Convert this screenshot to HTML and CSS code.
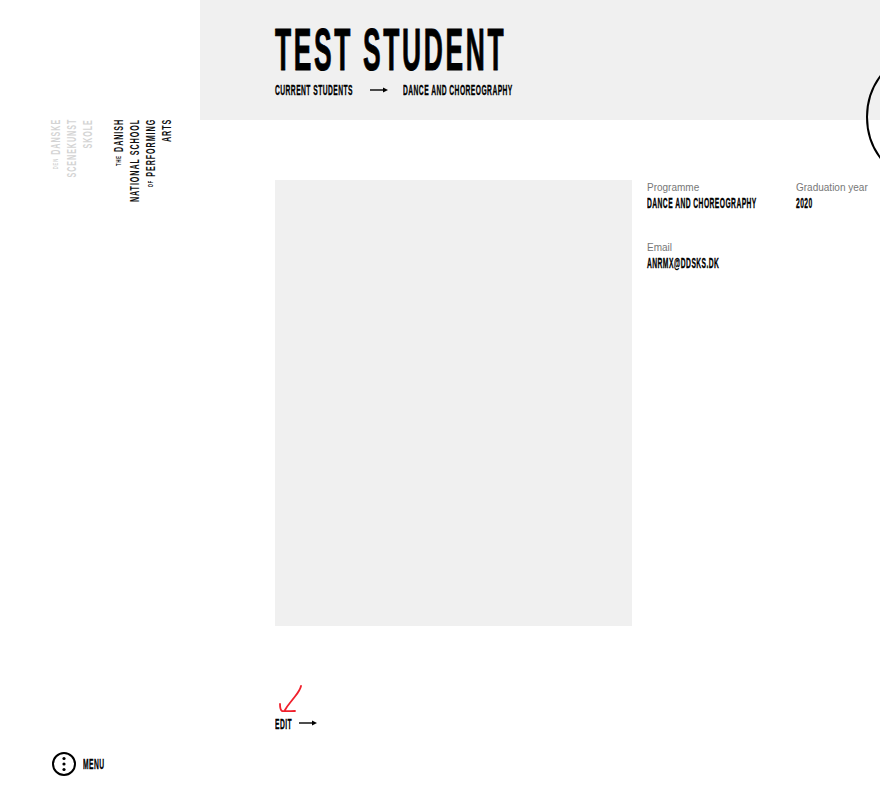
FILE: index.html
```html
<!DOCTYPE html>
<html lang="en">
<head>
    <meta charset="UTF-8">
    <title>Test Student</title>
    <link rel="stylesheet" href="styles.css">
</head>
<body>

<div class="page">
    <aside class="sidebar">
        <div class="logo">
            <div class="logo-block logo-da">
                <div><span class="small">DEN</span> DANSKE</div>
                <div>SCENEKUNST</div>
                <div>SKOLE</div>
            </div>
            <div class="logo-block logo-en">
                <div><span class="small">THE</span> DANISH</div>
                <div>NATIONAL SCHOOL</div>
                <div><span class="small">OF</span> PERFORMING</div>
                <div>ARTS</div>
            </div>
        </div>
        <div class="menu">
            <svg class="menu-icon" viewBox="0 0 24 24" width="24" height="24">
                <circle cx="12" cy="12" r="11" fill="none" stroke="#000" stroke-width="2"/>
                <circle cx="12" cy="6.5" r="1.6"/>
                <circle cx="12" cy="12" r="1.6"/>
                <circle cx="12" cy="17.5" r="1.6"/>
            </svg>
            <span class="narrow menu-label">MENU</span>
        </div>
    </aside>

    <main class="main">
        <header class="header">
            <h1 class="narrow title">TEST STUDENT</h1>
            <div class="crumbs">
                <span class="crumb-a"><span class="narrow">CURRENT STUDENTS</span></span>
                <svg class="arrow" viewBox="0 0 18 6" width="18" height="6"><path d="M0 3H14" stroke="#000" stroke-width="1.4"/><path d="M13 .6 18 3 13 5.4Z"/></svg>
                <span class="narrow">DANCE AND CHOREOGRAPHY</span>
            </div>
        </header>
        <div class="circle"></div>

        <section class="content">
            <div class="photo"></div>
            <div class="details">
                <div class="detail-row">
                    <div class="detail detail-wide">
                        <div class="label">Programme</div>
                        <div class="value"><span class="narrow">DANCE AND CHOREOGRAPHY</span></div>
                    </div>
                    <div class="detail">
                        <div class="label">Graduation year</div>
                        <div class="value"><span class="narrow">2020</span></div>
                    </div>
                </div>
                <div class="detail">
                    <div class="label">Email</div>
                    <div class="value"><span class="narrow">ANRMX@DDSKS.DK</span></div>
                </div>
            </div>
        </section>

        <div class="edit">
            <svg class="scribble" viewBox="0 0 24 30" width="24" height="30">
                <path d="M22 1C21 6 17 10 14 14C11 18 8 21 6 25M1 19C1 22 1.500 25 3 26C7 26.500 12 26 16 26" fill="none" stroke="#f0202c" stroke-width="1.800" stroke-linecap="round"/>
            </svg>
            <span class="edit-text"><span class="narrow">EDIT</span></span>
            <svg class="arrow" viewBox="0 0 18 6" width="18" height="6"><path d="M0 3H14" stroke="#000" stroke-width="1.4"/><path d="M13 .6 18 3 13 5.4Z"/></svg>
        </div>
    </main>
</div>

</body>
</html>
```

FILE: styles.css
```css
* {
    margin: 0;
    padding: 0;
    box-sizing: border-box;
}

body {
    background: #ffffff;
    color: #000;
    font-family: 'Liberation Sans', Arial, sans-serif;
    overflow: hidden;
}

.page {
    display: flex;
    width: 880px;
    height: 789px;
    overflow: hidden;
}

/* squeezed text, stands in for the tall condensed display face */
.narrow {
    display: inline-block;
    font-family: 'Liberation Sans Narrow', 'Liberation Sans', sans-serif;
    font-weight: 700;
    white-space: nowrap;
    letter-spacing: 1px;
    transform: scaleX(.447);
    transform-origin: left center;
    -webkit-text-stroke: .35px #000;
}

/* Sidebar */
.sidebar {
    width: 200px;
    flex-shrink: 0;
    display: flex;
    flex-direction: column;
    justify-content: space-between;
    padding: 119px 0 13px 52px;
}

.logo {
    display: flex;
    gap: 15px;
    margin-left: -4px;
    transform: scaleY(.546);
    transform-origin: left top;
}

.logo-block {
    writing-mode: vertical-rl;
    transform: rotate(180deg);
    text-align: right;
    font-family: 'Liberation Sans Narrow', 'Liberation Sans', sans-serif;
    font-size: 13px;
    font-weight: 700;
    line-height: 16px;
    letter-spacing: 1.800px;
    white-space: nowrap;
}

.logo-da {
    color: #d4d4d4;
}

.logo-en {
    color: #111;
}

.small {
    font-size: 7.500px;
}

.menu {
    display: flex;
    align-items: center;
    gap: 7px;
}

.menu-label {
    font-size: 15px;
    margin-bottom: 1px;
}

/* Main */
.main {
    position: relative;
    flex: 1;
    min-width: 0;
}

.header {
    height: 120px;
    padding: 19px 0 0 75px;
    background: #f0f0f0;
}

.title {
    display: block;
    font-size: 60px;
    line-height: 62px;
    letter-spacing: 6px;
    transform: scaleX(.44);
    -webkit-text-stroke: 1px #000;
}

.crumbs {
    display: flex;
    align-items: center;
    height: 16px;
    font-size: 15px;
}

.crumb-a {
    width: 95px;
}

.crumbs .arrow {
    margin: 1px 15px 0 0;
}

.circle {
    position: absolute;
    top: 47px;
    left: 666px;
    width: 140px;
    height: 140px;
    border: 2.500px solid #000;
    border-radius: 50%;
}

.content {
    display: flex;
    gap: 15px;
    padding: 60px 0 0 75px;
}

.photo {
    width: 357px;
    height: 446px;
    background: #f0f0f0;
}

.details {
    display: flex;
    flex-direction: column;
    gap: 29px;
    padding-top: 1px;
    flex: 1;
    min-width: 0;
}

.detail-row {
    display: flex;
}

.detail-wide {
    width: 149px;
}

.label {
    font-size: 10px;
    line-height: 14px;
    color: #777;
}

.value {
    font-size: 15px;
    line-height: 18px;
    margin-top: -1px;
}

.edit {
    position: relative;
    display: flex;
    align-items: center;
    gap: 7px;
    margin: 88px 0 0 75px;
    font-size: 15px;
    height: 18px;
}

.edit-text {
    width: 17px;
}

.scribble {
    position: absolute;
    left: 4px;
    top: -29px;
}
```
